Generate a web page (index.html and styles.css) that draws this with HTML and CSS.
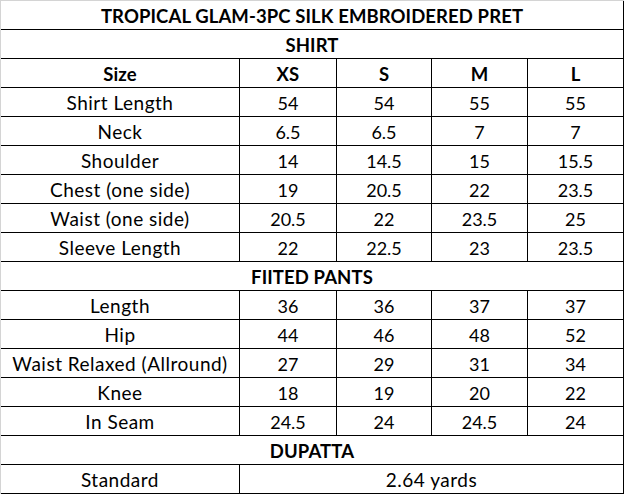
FILE: index.html
```html
<!DOCTYPE html>
<html lang="en">
<head>
<meta charset="utf-8">
<title>Tropical Glam Size Chart</title>
<link rel="stylesheet" href="styles.css">
</head>
<body>
<div class="sheet">
  <div class="chart">
    <div class="cell span-all bold">TROPICAL GLAM-3PC SILK EMBROIDERED PRET</div>
    <div class="cell span-all bold">SHIRT</div>

    <div class="cell bold">Size</div>
    <div class="cell bold">XS</div>
    <div class="cell bold">S</div>
    <div class="cell bold">M</div>
    <div class="cell bold">L</div>

    <div class="cell label">Shirt Length</div><div class="cell">54</div><div class="cell">54</div><div class="cell">55</div><div class="cell">55</div>
    <div class="cell label">Neck</div><div class="cell">6.5</div><div class="cell">6.5</div><div class="cell">7</div><div class="cell">7</div>
    <div class="cell label">Shoulder</div><div class="cell">14</div><div class="cell">14.5</div><div class="cell">15</div><div class="cell">15.5</div>
    <div class="cell label">Chest (one side)</div><div class="cell">19</div><div class="cell">20.5</div><div class="cell">22</div><div class="cell">23.5</div>
    <div class="cell label">Waist (one side)</div><div class="cell">20.5</div><div class="cell">22</div><div class="cell">23.5</div><div class="cell">25</div>
    <div class="cell label">Sleeve Length</div><div class="cell">22</div><div class="cell">22.5</div><div class="cell">23</div><div class="cell">23.5</div>

    <div class="cell span-all bold">FIITED PANTS</div>

    <div class="cell label">Length</div><div class="cell">36</div><div class="cell">36</div><div class="cell">37</div><div class="cell">37</div>
    <div class="cell label">Hip</div><div class="cell">44</div><div class="cell">46</div><div class="cell">48</div><div class="cell">52</div>
    <div class="cell label">Waist Relaxed (Allround)</div><div class="cell">27</div><div class="cell">29</div><div class="cell">31</div><div class="cell">34</div>
    <div class="cell label">Knee</div><div class="cell">18</div><div class="cell">19</div><div class="cell">20</div><div class="cell">22</div>
    <div class="cell label">In Seam</div><div class="cell">24.5</div><div class="cell">24</div><div class="cell">24.5</div><div class="cell">24</div>

    <div class="cell span-all bold">DUPATTA</div>

    <div class="cell label">Standard</div>
    <div class="cell label span-rest">2.64 yards</div>
  </div>
</div>
</body>
</html>
```

FILE: styles.css
```css
html, body {
  margin: 0;
  padding: 0;
  background: #ffffff;
}

.sheet {
  width: 624px;
  height: 494px;
  box-sizing: border-box;
  border-top: 1px solid #d4d4d4;
  border-left: 1px solid #d4d4d4;
  overflow: hidden;
}

.chart {
  display: grid;
  grid-template-columns: 239px 97px 95px 96px 96px;
  grid-auto-rows: 29px;
  font-family: Lato, "Liberation Sans", sans-serif;
  font-size: 18px;
  color: #000000;
}

.cell {
  box-sizing: border-box;
  border-right: 1px solid #000000;
  border-bottom: 1px solid #000000;
  display: flex;
  align-items: center;
  justify-content: center;
  padding-top: 2px;
  line-height: 24px;
  white-space: nowrap;
}

.span-all {
  grid-column: 1 / -1;
}

.span-rest {
  grid-column: 2 / -1;
}

.label {
  font-size: 19px;
  letter-spacing: 0.5px;
}

.bold {
  font-weight: 700;
  font-size: 18.5px;
  letter-spacing: 0.1px;
}
```
